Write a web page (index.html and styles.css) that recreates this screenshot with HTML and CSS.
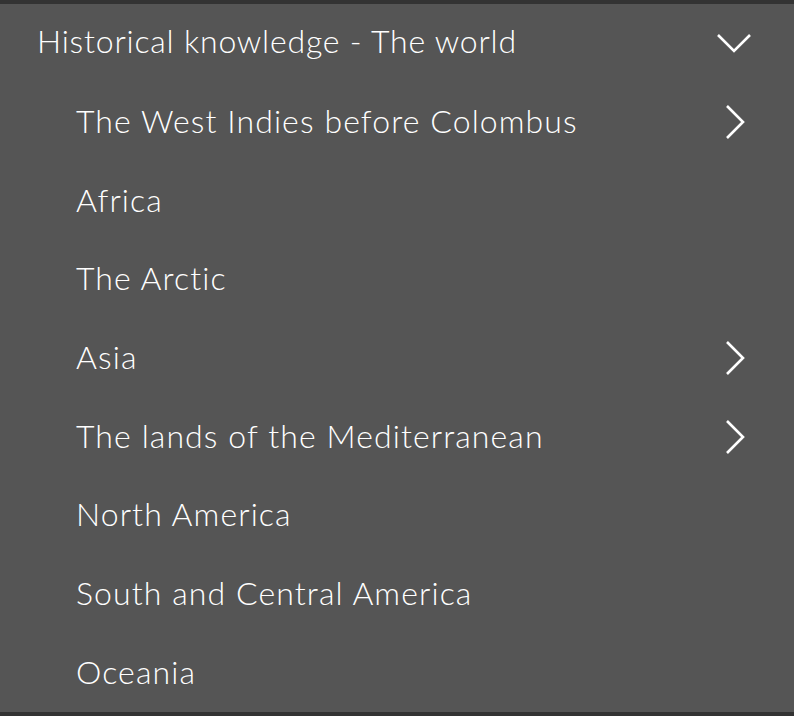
FILE: index.html
```html
<!DOCTYPE html>
<html lang="en">
<head>
  <meta charset="UTF-8">
  <meta name="viewport" content="width=device-width, initial-scale=1.0">
  <title>Historical knowledge</title>
  <link rel="stylesheet" href="styles.css">
</head>
<body>
  <div class="menu">
    <div class="row header">
      <span>Historical knowledge - The world</span>
      <svg class="chev-down" width="36" height="20" viewBox="0 0 36 20"><path d="M2 2 L18 18 L34 2" /></svg>
    </div>
    <div class="row item">
      <span>The West Indies before Colombus</span>
      <svg class="chev-right" width="22" height="36" viewBox="0 0 22 36"><path d="M2 2 L18 18 L2 34" /></svg>
    </div>
    <div class="row item"><span>Africa</span></div>
    <div class="row item"><span>The Arctic</span></div>
    <div class="row item">
      <span>Asia</span>
      <svg class="chev-right" width="22" height="36" viewBox="0 0 22 36"><path d="M2 2 L18 18 L2 34" /></svg>
    </div>
    <div class="row item">
      <span>The lands of the Mediterranean</span>
      <svg class="chev-right" width="22" height="36" viewBox="0 0 22 36"><path d="M2 2 L18 18 L2 34" /></svg>
    </div>
    <div class="row item"><span>North America</span></div>
    <div class="row item"><span>South and Central America</span></div>
    <div class="row item"><span>Oceania</span></div>
  </div>
</body>
</html>
```

FILE: styles.css
```css
body {
  margin: 0;
  background-color: #333333;
  font-family: Lato, "Open Sans", sans-serif;
  color: #ffffff;
}

.menu {
  margin-top: 4px;
  background-color: #555555;
  height: 708px;
  display: flex;
  flex-direction: column;
}

.row {
  height: 78.7px;
  display: flex;
  align-items: center;
  justify-content: space-between;
  font-size: 32px;
  font-weight: 300;
  box-sizing: border-box;
}

.header {
  padding: 0 42px 6px 37px;
  letter-spacing: 0.8px;
}

.header svg {
  margin-top: 6px;
}

.item {
  padding: 0 47px 3px 76px;
  letter-spacing: 1.1px;
}

.item svg {
  margin-top: 3px;
}

.row svg path {
  fill: none;
  stroke: #ffffff;
  stroke-width: 2.6;
}
```
